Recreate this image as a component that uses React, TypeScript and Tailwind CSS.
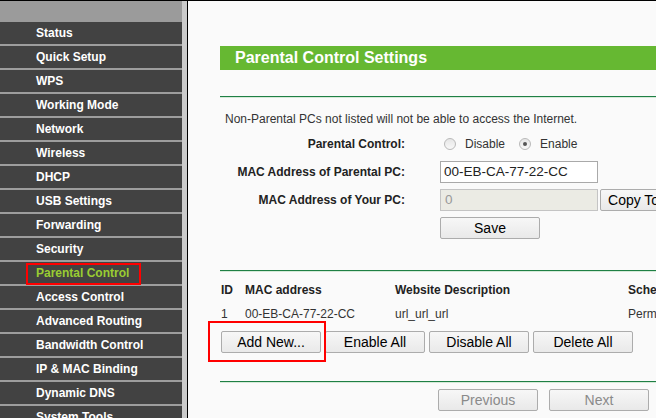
import React from "react";

const menu = [
  "Status",
  "Quick Setup",
  "WPS",
  "Working Mode",
  "Network",
  "Wireless",
  "DHCP",
  "USB Settings",
  "Forwarding",
  "Security",
  "Parental Control",
  "Access Control",
  "Advanced Routing",
  "Bandwidth Control",
  "IP & MAC Binding",
  "Dynamic DNS",
  "System Tools",
];

function Radio({ checked }: { checked?: boolean }) {
  return (
    <span className="flex h-[12px] w-[12px] items-center justify-center rounded-full border border-[#b9b9b9] bg-gradient-to-b from-[#e6e6e6] to-[#f8f8f8]">
      {checked && <span className="h-[4px] w-[4px] rounded-full bg-[#555]" />}
    </span>
  );
}

function Btn({ label, w, muted }: { label: string; w: string; muted?: boolean }) {
  return (
    <button
      className={`${w} h-[22px] shrink-0 rounded-[2px] border border-[#acacac] bg-gradient-to-b from-[#f7f7f7] to-[#e9e9e9] text-[14px] leading-none whitespace-nowrap ${
        muted ? "text-[#8a8a8a]" : "text-black"
      }`}
    >
      {label}
    </button>
  );
}

function GreenLine() {
  return (
    <div className="w-full shrink-0">
      <div className="h-[1px] bg-[#1f7f45]" />
      <div className="h-[1px] bg-[#d5ead8]" />
    </div>
  );
}

export default function App() {
  return (
    <div className="flex h-[418px] w-[656px] overflow-hidden border-t border-black bg-[#fafafa] font-['Liberation_Sans',Arial,sans-serif]">
      {/* sidebar */}
      <div className="flex w-[182px] shrink-0 flex-col bg-[#424242]">
        <div className="h-[21px] shrink-0 bg-[#9b9b9b]" />
        {menu.map((m) => (
          <div
            key={m}
            className="relative h-[24px] shrink-0 border-b-2 border-[#9d9d9d] pl-[36px] text-[12px] font-bold leading-[22px] whitespace-nowrap"
          >
            <span className={m === "Parental Control" ? "text-[#9acd32]" : "text-white"}>{m}</span>
            {m === "Parental Control" && (
              <span className="absolute left-[26px] top-[1px] h-[22px] w-[115px] border-2 border-[#ff0000]" />
            )}
          </div>
        ))}
      </div>
      <div className="w-[5px] shrink-0 bg-[#cbcbcb]" />
      <div className="w-[1px] shrink-0 bg-black" />

      {/* content */}
      <div className="flex min-w-0 flex-1 flex-col pl-[32px] pt-[45px] text-[12px] text-[#333]">
        <div className="h-[24px] w-full shrink-0 bg-[#66b832] pl-[15px] text-[16px] font-bold leading-[24px] text-white">
          Parental Control Settings
        </div>
        <div className="h-[26px] shrink-0" />
        <GreenLine />

        <div className="mt-[14px] pl-[5px] leading-[14px] whitespace-nowrap">
          Non-Parental PCs not listed will not be able to access the Internet.
        </div>

        <div className="mt-[10px] grid grid-cols-[185px_1fr] gap-x-[35px] gap-y-[6px] whitespace-nowrap">
          <div className="h-[19px] text-right font-bold leading-[16px] text-[#222]">Parental Control:</div>
          <div className="flex h-[16px] items-center text-[12px] text-[#333]">
            <span className="ml-[4px]"><Radio /></span>
            <span className="ml-[9px]">Disable</span>
            <span className="ml-[14px]"><Radio checked /></span>
            <span className="ml-[9px]">Enable</span>
          </div>

          <div className="h-[22px] text-right font-bold leading-[22px] text-[#222]">MAC Address of Parental PC:</div>
          <div className="flex h-[22px]">
            <div className="h-[22px] w-[158px] border border-[#a9a9a9] bg-white pl-[3px] text-[13.5px] leading-[20px] text-[#222]">
              00-EB-CA-77-22-CC
            </div>
          </div>

          <div className="h-[22px] text-right font-bold leading-[22px] text-[#222]">MAC Address of Your PC:</div>
          <div className="flex h-[22px] gap-[2px]">
            <div className="h-[22px] w-[158px] shrink-0 border border-[#c4c4c4] bg-[#ebebe4] pl-[4px] text-[13.5px] leading-[20px] text-[#999]">
              0
            </div>
            <Btn label="Copy To Above" w="w-[110px]" />
          </div>

          <div />
          <div className="flex">
            <Btn label="Save" w="w-[100px]" />
          </div>
        </div>

        <div className="h-[31px] shrink-0" />
        <GreenLine />

        <div className="mt-[10px] flex h-[16px] shrink-0 items-center whitespace-nowrap font-bold text-[#222]">
          <span className="w-[25px] shrink-0 pl-[1px]">ID</span>
          <span className="w-[150px] shrink-0">MAC address</span>
          <span className="w-[233px] shrink-0">Website Description</span>
          <span className="shrink-0">Schedule</span>
        </div>
        <div className="mt-[8px] flex h-[16px] shrink-0 items-center whitespace-nowrap text-[#333]">
          <span className="w-[25px] shrink-0 pl-[1px]">1</span>
          <span className="w-[150px] shrink-0">00-EB-CA-77-22-CC</span>
          <span className="w-[233px] shrink-0">url_url_url</span>
          <span className="shrink-0">Permanent</span>
        </div>

        <div className="mt-[9px] flex shrink-0 gap-[4px] pl-[1px]">
          <div className="relative shrink-0">
            <Btn label="Add New..." w="w-[100px]" />
            <span className="absolute left-[-13px] top-[-10px] h-[41px] w-[118px] border-2 border-[#ff0000]" />
          </div>
          <Btn label="Enable All" w="w-[100px]" />
          <Btn label="Disable All" w="w-[100px]" />
          <Btn label="Delete All" w="w-[100px]" />
        </div>

        <div className="h-[28px] shrink-0" />
        <GreenLine />

        <div className="mt-[6px] flex shrink-0 gap-[11px] pl-[218px]">
          <Btn label="Previous" w="w-[100px]" muted />
          <Btn label="Next" w="w-[100px]" muted />
        </div>
      </div>
    </div>
  );
}
